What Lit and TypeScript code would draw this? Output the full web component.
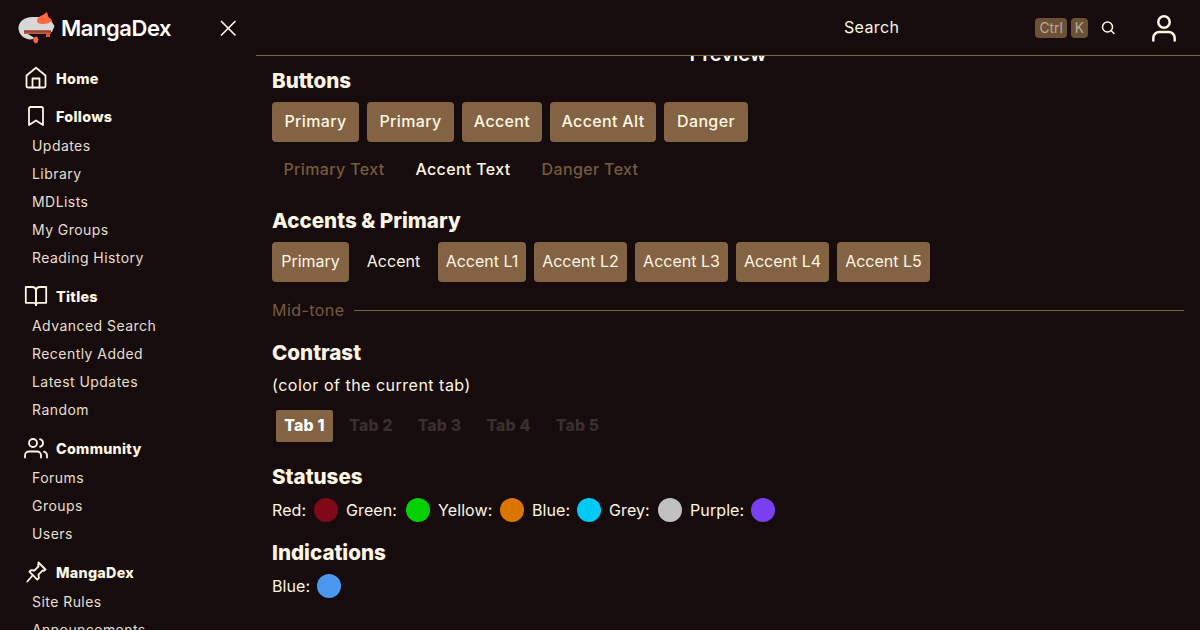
import { LitElement, html, css, svg, unsafeCSS } from "lit";
import { customElement } from "lit/decorators.js";

const FONT = unsafeCSS(`"Inter","Noto Sans",sans-serif`);

const icons: Record<string, unknown> = {
  home: svg`<path d="M2.5 9.5 12 1.8l9.5 7.7V20a1.5 1.5 0 0 1-1.5 1.5H4A1.5 1.5 0 0 1 2.5 20z"/><path d="M8.5 21.5V12.5h7v9"/>`,
  bookmark: svg`<path d="M19 21l-7-4.5L5 21V4.5A1.5 1.5 0 0 1 6.5 3h11A1.5 1.5 0 0 1 19 4.5z"/>`,
  book: svg`<path d="M1.8 3H8c2.5 0 4 1.5 4 4v14c0-1.300-1.200-2.200-2.500-2.200H1.800z"/><path d="M22.200 3H16c-2.500 0-4 1.500-4 4v14c0-1.300 1.200-2.200 2.500-2.200h7.700z"/>`,
  users: svg`<path d="M17 21.500v-2a4 4 0 0 0-4-4H5a4 4 0 0 0-4 4v2"/><circle cx="9" cy="7" r="4"/><path d="M23 21.500v-2a4 4 0 0 0-3-3.870"/><path d="M16 3.130a4 4 0 0 1 0 7.750"/>`,
  pin: svg`<path d="M14.500 2.500l7 7-1.500 1.300-1.300-.4-4.200 4.200.4 3.400-1.600 1.600-7.900-7.900 1.600-1.600 3.400.4 4.200-4.200-.4-1.300z"/><path d="M8.500 15.500 3.300 21.500"/>`,
};

const BUTTONS: [string, number][] = [["Primary", 87], ["Primary", 87], ["Accent", 80], ["Accent Alt", 106], ["Danger", 84]];
const GHOSTS: [string, number, boolean][] = [["Primary Text", 124, true], ["Accent Text", 118, false], ["Danger Text", 120, true]];
const SWATCHES: [string, number, boolean][] = [
  ["Primary", 77, true], ["Accent", 73, false], ["Accent L1", 88, true], ["Accent L2", 93, true],
  ["Accent L3", 93, true], ["Accent L4", 93, true], ["Accent L5", 93, true],
];
const TABS: [string, number, boolean][] = [["Tab 1", 57, true], ["Tab 2", 60, false], ["Tab 3", 61, false], ["Tab 4", 61, false], ["Tab 5", 61, false]];
const STATUSES: [string, string, number][] = [
  ["Red:", "#7f0819", 34], ["Green:", "#04d000", 52], ["Yellow:", "#da7500", 54],
  ["Blue:", "#00c9f5", 37], ["Grey:", "#c0c0c0", 41], ["Purple:", "#7b3ff2", 53],
];
const NAV: [string, string, string[]][] = [
  ["bookmark", "Follows", ["Updates", "Library", "MDLists", "My Groups", "Reading History"]],
  ["book", "Titles", ["Advanced Search", "Recently Added", "Latest Updates", "Random"]],
  ["users", "Community", ["Forums", "Groups", "Users"]],
  ["pin", "MangaDex", ["Site Rules", "Announcements"]],
];

@customElement("app-root")
export class AppRoot extends LitElement {
  static styles = css`
    :host { display: block; font-family: ${FONT}; }
    * { box-sizing: border-box; }
    .page { display: flex; width: 1200px; height: 630px; overflow: hidden; background: #170c0d; color: #fdf6e3; }
    .side { width: 256px; flex: none; display: flex; flex-direction: column; overflow: hidden; }
    .brand { height: 56px; flex: none; display: flex; align-items: center; padding: 0 19px 0 17px; margin-bottom: 6px; }
    .mark { width: 40px; height: 40px; flex: none; }
    .wordmark { font-size: 22px; font-weight: 600; color: #fff; letter-spacing: -0.45px; margin-left: 4px; flex: 1; }
    .close { width: 18px; height: 18px; fill: none; stroke: #fdf6e3; stroke-width: 1.7; stroke-linecap: round; }
    .head { height: 32px; flex: none; display: flex; align-items: center; gap: 8px; padding-left: 24px; font-size: 14.3px; font-weight: 800; letter-spacing: 0.3px; margin-top: 8px; }
    .head.first { margin-top: 0; margin-bottom: -2px; }
    .head svg { width: 24px; height: 24px; fill: none; stroke: #fdf6e3; stroke-width: 1.8; stroke-linejoin: round; stroke-linecap: round; flex: none; }
    .sub { height: 28px; flex: none; display: flex; align-items: center; padding: 0 0 2px 32px; font-size: 14px; letter-spacing: 0.45px; color: #e6dfcd; }
    .main { flex: 1; min-width: 0; display: flex; flex-direction: column; overflow: hidden; }
    .top { height: 56px; flex: none; border-bottom: 1px solid #82633f; display: flex; align-items: center; padding: 0 20px 0 0; }
    .search { margin-left: 588px; font-size: 16px; letter-spacing: 0.35px; color: #fdf6e3; flex: 1; padding-bottom: 1px; }
    .key { height: 20px; display: flex; align-items: center; padding: 0 4px; background: #6d5136; border-radius: 4px; color: #baab98; font-size: 13.8px; margin-right: 4px; }
    .glass { width: 16px; height: 16px; margin-left: 8px; fill: none; stroke: #fdf6e3; stroke-width: 1.5; stroke-linecap: round; }
    .user { width: 32px; height: 32px; margin-left: 32px; fill: none; stroke: #fdf6e3; stroke-width: 2.500; stroke-linecap: round; }
    .content { flex: 1; padding: 0 16px; overflow: hidden; }
    .preview { text-align: center; font-size: 20px; font-weight: 600; color: #fff; line-height: 22px; margin-top: -13px; }
    h2 { margin: 15px 0 0; height: 30px; font-size: 20.6px; font-weight: 800; color: #fdf6e3; line-height: 32px; letter-spacing: 0; }
    h2.flush { margin-top: 0; }
    h2.after-tabs { margin-top: 19px; }
    .btns { display: flex; gap: 8px; margin-top: 7px; }
    .btns.ghost { margin-top: 8px; }
    .btn { height: 40px; display: flex; align-items: center; justify-content: center; padding-bottom: 2px; background: #836344; border-radius: 4px; font-size: 16px; font-weight: 500; letter-spacing: 0.35px; color: #fdf6e3; white-space: nowrap; }
    .txt { background: none; }
    .dim { color: #765a3c; }
    .sw { font-weight: 400; letter-spacing: 0; }
    .mid { display: flex; align-items: center; gap: 9px; color: #765a3c; font-size: 16px; letter-spacing: 0.45px; height: 24px; margin-top: 16px; padding-bottom: 1px; }
    .mid::after { content: ""; flex: 1; height: 1px; background: #82633f; margin-top: 1px; }
    .note { font-size: 16px; line-height: 24px; margin-top: 6px; letter-spacing: 0.5px; }
    .tabs { display: flex; gap: 8px; margin: 13px 0 0 4px; }
    .tab { height: 32px; display: flex; align-items: center; justify-content: center; padding-bottom: 1px; font-size: 15.8px; font-weight: 800; letter-spacing: 0.2px; color: #38302f; border-radius: 2px; white-space: nowrap; }
    .tab.on { background: #836344; color: #fff; }
    .row { display: flex; align-items: center; height: 24px; font-size: 16px; letter-spacing: 0.1px; margin-top: 7px; }
    .item { display: flex; align-items: center; gap: 8px; margin-right: 8px; }
    .label { display: block; white-space: nowrap; padding-bottom: 1px; }
    .dot { width: 24px; height: 24px; border-radius: 50%; flex: none; }
  `;

  private ic(n: string) {
    return html`<svg viewBox="0 0 24 24">${icons[n]}</svg>`;
  }

  render() {
    return html`<div class="page">
      <aside class="side">
        <div class="brand">
          <svg class="mark" viewBox="17 8 40 40">
            <path d="M18.500 29C18 22 24 17 32 17h8l10 2 4.500 7-2 5-3 3H28l5 3v2c-3 1-8 0-11-3-2-2-3.300-4.500-3.500-7z" fill="#d8d8d8"/>
            <path d="M37 21c0-4 4-5 6.500-6.500L47 12l1.500 5 3.500 3c-1 3-6 4-10 4-3 0-5-1-5-3z" fill="#ff6740"/>
            <path d="M24 30h27v1.300H24z" fill="#e0532f"/>
            <path d="M24 31.300h27v1.400H24z" fill="#3a2a2a"/>
            <path d="M24 32.700h27V34H24z" fill="#e0532f"/>
            <path d="M46 34h4v3h-4z" fill="#e0532f"/>
            <path d="M33 37.500l4-1 1.500 3-1 3-2 1-2-2z" fill="#ff6740"/>
          </svg>
          <span class="wordmark">MangaDex</span>
          <svg class="close" viewBox="0 0 18 18"><path d="M2.500 2.500l13.500 13.500M16 2.500 2.500 16"/></svg>
        </div>
        <div class="head first">${this.ic("home")}<span>Home</span></div>
        ${NAV.map(([ic, label, subs]) => html`
          <div class="head">${this.ic(ic)}<span>${label}</span></div>
          ${subs.map((s) => html`<div class="sub">${s}</div>`)}
        `)}
      </aside>
      <main class="main">
        <header class="top">
          <span class="search">Search</span>
          <span class="key">Ctrl</span><span class="key">K</span>
          <svg class="glass" viewBox="0 0 16 16"><circle cx="7.500" cy="7" r="5"/><path d="M11.500 11l2.500 2.500"/></svg>
          <svg class="user" viewBox="0 0 32 32"><circle cx="16" cy="10" r="5.700"/><path d="M5.300 28.500V26a6 6 0 0 1 6-6h9.400a6 6 0 0 1 6 6v2.500"/></svg>
        </header>
        <div class="content">
          <div class="preview">Preview</div>
          <h2 class="flush">Buttons</h2>
          <div class="btns">
            ${BUTTONS.map(([b, w]) => html`<div class="btn" style="width:${w}px">${b}</div>`)}
          </div>
          <div class="btns ghost">
            ${GHOSTS.map(([b, w, dim]) => html`<div class="btn txt ${dim ? "dim" : ""}" style="width:${w}px">${b}</div>`)}
          </div>
          <h2>Accents &amp; Primary</h2>
          <div class="btns">
            ${SWATCHES.map(([b, w, fill]) => html`<div class="btn sw ${fill ? "" : "txt"}" style="width:${w}px">${b}</div>`)}
          </div>
          <div class="mid">Mid-tone</div>
          <h2>Contrast</h2>
          <div class="note">(color of the current tab)</div>
          <div class="tabs">
            ${TABS.map(([t, w, on]) => html`<div class="tab ${on ? "on" : ""}" style="width:${w}px">${t}</div>`)}
          </div>
          <h2 class="after-tabs">Statuses</h2>
          <div class="row">
            ${STATUSES.map(([l, c, w]) => html`<div class="item"><span class="label" style="width:${w}px">${l}</span><span class="dot" style="background:${c}"></span></div>`)}
          </div>
          <h2>Indications</h2>
          <div class="row"><div class="item"><span class="label" style="width:37px">Blue:</span><span class="dot" style="background:#4a98f0"></span></div></div>
        </div>
      </main>
    </div>`;
  }
}
